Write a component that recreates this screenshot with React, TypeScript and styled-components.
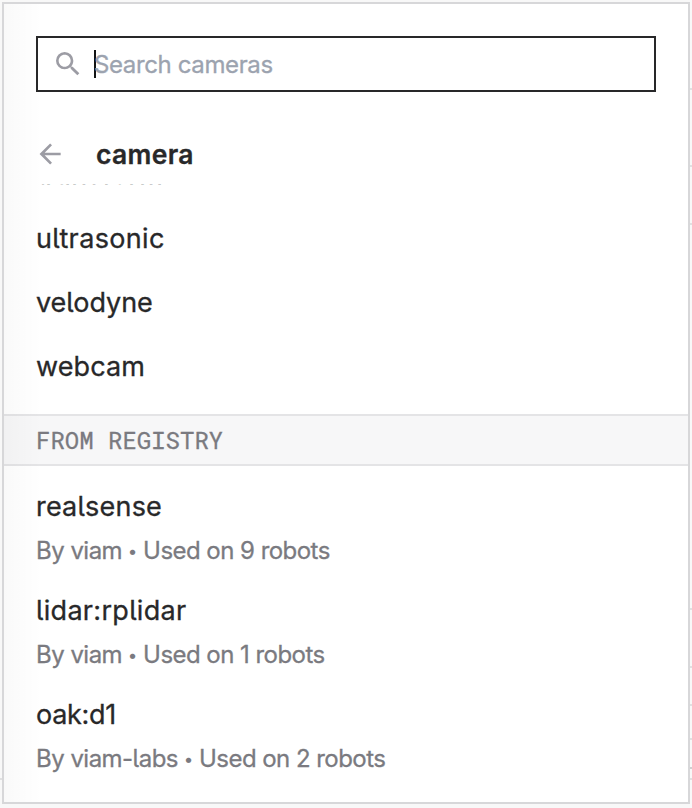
import React from "react";
import styled, { createGlobalStyle } from "styled-components";

const GlobalStyle = createGlobalStyle`
  *, *::before, *::after { box-sizing: border-box; }
  body {
    margin: 0;
    background: #f9f9f9;
    color: #282829;
    font-family: Inter, "Liberation Sans", sans-serif;
    font-feature-settings: "cv05" 1;
    overflow: hidden;
  }
`;

const Page = styled.div`
  position: relative;
  width: 692px;
  height: 808px;
  padding: 2px 2px 4px;
  background: #f8f8f8;
`;

const Tick = styled.div<{ $top: number; $dark?: boolean; $left?: boolean }>`
  position: absolute;
  top: ${(p) => p.$top}px;
  ${(p) => (p.$left ? "left: 0;" : "right: 0;")}
  width: 2px;
  height: 2px;
  background: ${(p) => (p.$dark ? "#cfcfd0" : "#e0e0e1")};
`;

const Panel = styled.div`
  position: relative;
  width: 688px;
  height: 802px;
  border: 2px solid #d7d7d9;
  background: #fff;

  &::after {
    content: "";
    position: absolute;
    inset: 0 auto 0 0;
    width: 38px;
    background: linear-gradient(90deg, rgba(0, 0, 0, 0.024), rgba(0, 0, 0, 0));
    pointer-events: none;
  }
`;

const SearchBox = styled.div`
  display: flex;
  align-items: center;
  width: 620px;
  height: 56px;
  margin: 32px 32px 0;
  padding-left: 14px;
  border: 2px solid #282829;
`;

const SearchIcon = styled.svg`
  width: 32px;
  height: 32px;
  fill: #9c9ca4;
`;

const Caret = styled.span`
  width: 2px;
  height: 28px;
  margin-left: 10px;
  background: #131414;
`;

const Label = styled.span<{ $spacing: number }>`
  display: inline-block;
  white-space: pre;
  letter-spacing: ${(p) => p.$spacing}px;
  -webkit-text-stroke: 0.3px currentColor;
`;

const Placeholder = styled(Label)`
  margin-left: -2px;
  color: #9ca3af;
  font-size: 24px;
`;

const Header = styled.div`
  display: flex;
  align-items: center;
  height: 60px;
  margin-top: 32px;
  padding: 0 32px;
`;

const BackIcon = styled.svg`
  width: 32px;
  height: 32px;
  margin-left: -2px;
  fill: #9c9ca4;
`;

const Title = styled(Label)`
  margin-left: 30px;
  font-size: 26.5px;
  font-weight: 600;
`;

const List = styled.div`
  height: 230px;
  overflow: hidden;
  padding: 0 32px;
`;

const ListInner = styled.div`
  margin-top: -42px;
`;

const Row = styled.div`
  height: 64px;
  display: flex;
  align-items: center;
  font-size: 27px;
`;

const SectionHeading = styled.div`
  height: 52px;
  padding: 0 32px;
  border: solid #e4e4e6;
  border-width: 2px 0;
  background: #f7f7f8;
  color: #7a7a80;
  font: 24px/48px "Roboto Mono", "DejaVu Sans Mono", monospace;
  -webkit-text-stroke: 0.3px currentColor;
`;

const Registry = styled.div`
  padding: 19px 32px 0;
`;

const Entry = styled.div`
  height: 104px;
`;

const Name = styled.div`
  font-size: 27px;
  line-height: 44px;
`;

const Meta = styled.div`
  display: flex;
  align-items: center;
  font-size: 24px;
  line-height: 44px;
  color: #7a7a80;
`;

const Bullet = styled.span`
  width: 21px;
  font-size: 17px;
  text-align: center;
`;

const models = [
  { name: "transform", spacing: 0.35 },
  { name: "ultrasonic", spacing: 0.35 },
  { name: "velodyne", spacing: -0.05 },
  { name: "webcam", spacing: 0.1 },
];

const registry = [
  { name: "realsense", spacing: 0.2, author: "By viam", usage: "Used on 9 robots" },
  { name: "lidar:rplidar", spacing: 0.3, author: "By viam", usage: "Used on 1 robots" },
  { name: "oak:d1", spacing: -0.3, author: "By viam-labs", usage: "Used on 2 robots" },
];

export default function App() {
  return (
    <>
      <GlobalStyle />
      <Page>
        {[88, 165, 223, 608, 666, 704, 738, 778].map((top) => (
          <Tick key={top} $top={top} />
        ))}
        <Tick $top={767} $dark />
        <Tick $top={778} $left />
        <Panel>
          <SearchBox>
            <SearchIcon viewBox="0 0 24 24">
              <path d="M9.5 3A6.5 6.5 0 0 1 16 9.5c0 1.61-.59 3.09-1.56 4.23l.27.27h.79l5 5-1.5 1.5-5-5v-.79l-.27-.27A6.516 6.516 0 0 1 9.5 16a6.5 6.5 0 0 1 0-13m0 2C7 5 5 7 5 9.5S7 14 9.5 14 14 12 14 9.5 12 5 9.5 5Z" />
            </SearchIcon>
            <Caret />
            <Placeholder $spacing={-0.38}>Search cameras</Placeholder>
          </SearchBox>
          <Header>
            <BackIcon viewBox="0 0 24 24">
              <path d="M20 11v2H8l5.5 5.5-1.42 1.42L4.16 12l7.92-7.92L13.5 5.5 8 11h12Z" />
            </BackIcon>
            <Title $spacing={0.3}>camera</Title>
          </Header>
          <List>
            <ListInner>
              {models.map((m) => (
                <Row key={m.name}>
                  <Label $spacing={m.spacing}>{m.name}</Label>
                </Row>
              ))}
            </ListInner>
          </List>
          <SectionHeading>FROM REGISTRY</SectionHeading>
          <Registry>
            {registry.map((r) => (
              <Entry key={r.name}>
                <Name>
                  <Label $spacing={r.spacing}>{r.name}</Label>
                </Name>
                <Meta>
                  <Label $spacing={-0.52}>{r.author}</Label>
                  <Bullet>•</Bullet>
                  <Label $spacing={-0.54}>{r.usage}</Label>
                </Meta>
              </Entry>
            ))}
          </Registry>
        </Panel>
      </Page>
    </>
  );
}
